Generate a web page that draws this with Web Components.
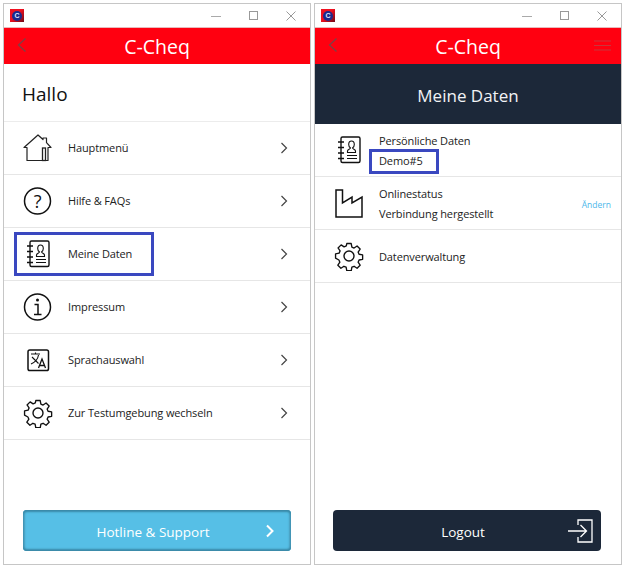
<!DOCTYPE html>
<html lang="de"><head><meta charset="utf-8"><title>C-Cheq</title>
<style>
html,body{margin:0;padding:0;background:#fff;height:100%;overflow:hidden}
body{font-family:"Open Sans","Noto Sans",sans-serif}
#stage{display:flex;gap:3px;padding:3px 0 0 3px;box-sizing:border-box;height:567px}
</style></head><body>
<div id="stage">
<app-window>
  <menu-list>
    <greeting-head>Hallo</greeting-head>
    <menu-row icon="home" chevron>Hauptmenü</menu-row>
    <menu-row icon="help" chevron>Hilfe &amp; FAQs</menu-row>
    <menu-row icon="book" chevron mark>Meine Daten</menu-row>
    <menu-row icon="info" chevron>Impressum</menu-row>
    <menu-row icon="lang" chevron>Sprachauswahl</menu-row>
    <menu-row icon="gear" chevron>Zur Testumgebung wechseln</menu-row>
  </menu-list>
  <action-button slot="foot" kind="hotline">Hotline &amp; Support</action-button>
</app-window>
<app-window menu>
  <menu-list>
    <page-banner>Meine Daten</page-banner>
    <menu-row low icon="book" sub="Demo#5" marksub>Persönliche Daten</menu-row>
    <menu-row low icon="factory" sub="Verbindung hergestellt" action="Ändern">Onlinestatus</menu-row>
    <menu-row low icon="gear">Datenverwaltung</menu-row>
  </menu-list>
  <action-button slot="foot" kind="logout" style="margin:0 1px 0 -1px">Logout</action-button>
</app-window>
</div>
<script>
const ICONS={
home:'<path d="M1 14.500 15 2l5 4.500V5h3.500v4.700L28 14.500h-3V27.500H4V14.500Z" fill="none" stroke="#222" stroke-width="1.200" stroke-linejoin="round"/><rect x="19.500" y="15" width="3" height="12.500" fill="none" stroke="#222" stroke-width="1.300"/>',
help:'<circle cx="14.500" cy="15" r="13" fill="none" stroke="#111" stroke-width="1.500"/><text x="14.500" y="21.500" text-anchor="middle" font-family="Open Sans,sans-serif" font-size="18" fill="#111">?</text>',
info:'<circle cx="14.500" cy="15" r="13" fill="none" stroke="#111" stroke-width="1.500"/><circle cx="14.500" cy="8" r="1.500" fill="#111"/><path d="M11.500 12.500h3.500V22M11 22.500h7.500" fill="none" stroke="#111" stroke-width="1.500"/>',
book:'<rect x="7" y="2" width="19" height="25.500" rx="1.500" fill="none" stroke="#111" stroke-width="1.400"/><path d="M4 7h6M4 12.500h6M4 18h6M4 23.500h6" stroke="#111" stroke-width="1.500"/><path d="M13.500 17.500v-1.500c0-1.500 2.800-1.800 3-3-1.300-.8-1.800-2-1.800-3.500 0-2 1-3.500 2.800-3.500s2.800 1.500 2.800 3.500c0 1.500-.5 2.700-1.800 3.500.2 1.200 3 1.500 3 3v1.500ZM13 20.500h10M13 23.500h10" fill="none" stroke="#111" stroke-width="1.100"/>',
lang:'<rect x="5" y="5" width="20.500" height="20.500" rx="1.800" fill="none" stroke="#111" stroke-width="1.500"/><path d="M8 9h9M12.500 7.500V9M9 12l6.500 6.500M15.500 10c-.5 3.500-3 7-7.500 9" fill="none" stroke="#111" stroke-width="1.100"/><path d="M15.500 23l3.500-9 3.500 9M16.700 20.500h4.600" fill="none" stroke="#111" stroke-width="1.300"/>',
gear:'<path d="M12.700 2h4.600l.7 3.700 2.300 1 3.100-2.100 3.200 3.200-2.100 3.100 1 2.300 3.700.7v4.600l-3.700.7-1 2.300 2.100 3.100-3.200 3.200-3.100-2.100-2.300 1-.7 3.700h-4.600l-.7-3.700-2.300-1-3.100 2.100-3.200-3.200 2.100-3.100-1-2.300L1 17.300v-4.600l3.700-.7 1-2.300-2.100-3.100 3.200-3.200 3.100 2.100 2.300-1Z" transform="translate(15 15) scale(.96) translate(-15 -15)" fill="none" stroke="#111" stroke-width="1.400" stroke-linejoin="round"/><circle cx="15" cy="15" r="5" fill="none" stroke="#111" stroke-width="1.400"/>',
factory:'<path d="M2 29V2h6.500v13l9.500-6v6l10-6v20Z" fill="none" stroke="#111" stroke-width="1.500" stroke-linejoin="miter"/>'
};
function def(name,css,html,extra){
  customElements.define(name,class extends HTMLElement{
    constructor(){super();this.attachShadow({mode:'open'}).innerHTML='<style>'+css+'</style>'+html;}
    connectedCallback(){extra&&extra(this,this.shadowRoot);}
  });
}
def('window-controls',`
:host{display:flex;align-items:center;height:23px;background:#fff;border-bottom:1px solid #e9b9bb;padding:0 0 0 6px;box-sizing:content-box}
.logo{width:14px;height:13px;background:linear-gradient(135deg,#f01020 0 45%,#700818);display:flex;align-items:center;justify-content:center}
.logo i{width:10px;height:10px;border-radius:50%;background:#1c2a8c;display:flex;align-items:center;justify-content:center;font:700 7px "Liberation Sans",sans-serif;color:#dfe3ff;font-style:normal}
.sp{flex:1}
.b{width:37.500px;height:23px;display:flex;align-items:center;justify-content:center}
svg{display:block}`,`
<div class="logo"><i>C</i></div><div class="sp"></div>
<div class="b"><svg width="10" height="10"><path d="M0 5.500h10" stroke="#aaa"/></svg></div>
<div class="b"><svg width="10" height="10"><rect x=".5" y=".5" width="8" height="8" fill="none" stroke="#999"/></svg></div>
<div class="b"><svg width="10" height="10"><path d="M.5.500l9 9M9.500.500l-9 9" stroke="#999"/></svg></div>`);
def('app-header',`
:host{display:grid;grid-template-columns:36px 1fr 36px;align-items:center;height:36px;background:#ff0010;color:#fff;font-size:19.500px;text-align:center}
svg{display:block;margin:auto}
.t{line-height:36px;position:relative;top:1px}`,`
<svg width="10" height="16" style="margin:-3px 0 0 13px"><path d="M8.500 1.500 1.500 8l7 6.500" fill="none" stroke="#7d4046" stroke-width="1.300"/></svg>
<div class="t">C-Cheq</div>
<div class="m"></div>`);
def('app-window',`
:host{display:flex;flex-direction:column;width:306px;height:560px;border:1px solid #c6c6c6;background:#fff;box-sizing:content-box;position:relative}
main{flex:1;min-height:0}
footer{padding:0 19px 13px 19px}`,`
<window-controls></window-controls><app-header></app-header>
<main><slot></slot></main><footer><slot name="foot"></slot></footer>`,(el,s)=>{
  if(el.hasAttribute('menu'))s.querySelector('app-header').shadowRoot.querySelector('.m').innerHTML='<svg width="17" height="11" style="margin:-1px 0 0 9px"><path d="M0 1h17M0 5.500h17M0 10h17" stroke="#c9353c" stroke-width="1"/></svg>';
});
def('menu-list',`:host{display:block}`,`<slot></slot>`);
def('greeting-head',`:host{display:flex;align-items:center;box-sizing:border-box;height:58px;padding:2px 0 0 18px;font-size:19px;color:#111;border-bottom:1px solid #ececec}`,`<slot></slot>`);
def('page-banner',`:host{display:flex;align-items:center;justify-content:center;box-sizing:border-box;height:60px;padding-top:2px;background:#1c2839;color:#f2f3f5;font-size:17px}`,`<slot></slot>`);
def('menu-row',`
:host{display:grid;grid-template-columns:64px 1fr auto 30px;align-items:center;height:52px;border-bottom:1px solid #e6e6e6;color:#222;font-size:11px;letter-spacing:-.12px;position:relative}
:host([action]){grid-template-columns:64px 1fr auto 10px}
:host([low]) .tx{padding-top:2px}
.ic{padding-left:19px;display:flex}
.tx{display:flex;flex-direction:column;gap:2px;line-height:18px}
.ac{color:#4db8ea;font-size:8.500px;letter-spacing:0;padding-top:2px}
.ch{display:flex}
.mark{position:absolute;border:3.500px solid #3a48c0;box-sizing:border-box;pointer-events:none;left:10px;top:4px;width:140px;height:44px}
.submark{position:absolute;border:3.500px solid #3a48c0;box-sizing:border-box;left:54px;top:25px;width:70px;height:25px}
svg{display:block}`,`
<div class="ic"></div><div class="tx"><div><slot></slot></div></div><div class="ac"></div><div class="ch"></div>`,(el,s)=>{
  s.querySelector('.ic').innerHTML='<svg width="30" height="30" viewBox="0 0 30 30">'+ICONS[el.getAttribute('icon')]+'</svg>';
  const tx=s.querySelector('.tx');
  if(el.hasAttribute('sub')){const d=document.createElement('div');d.textContent=el.getAttribute('sub');tx.appendChild(d);}
  if(el.hasAttribute('action'))s.querySelector('.ac').textContent=el.getAttribute('action');
  if(el.hasAttribute('chevron'))s.querySelector('.ch').innerHTML='<svg width="8" height="12"><path d="M1.500 1 6.500 6l-5 5" fill="none" stroke="#444" stroke-width="1.200"/></svg>';
  if(el.hasAttribute('mark')){const m=document.createElement('div');m.className='mark';s.appendChild(m);}
  if(el.hasAttribute('marksub')){const m=document.createElement('div');m.className='submark';s.appendChild(m);}
});
def('action-button',`
:host{display:grid;grid-template-columns:1fr 40px;align-items:center;height:41px;border-radius:4px;font-size:13.500px;color:#fff;text-align:center;box-sizing:border-box}
:host([kind=hotline]){background:#56bfe6;box-shadow:inset 0 2px 2px #3a8aa8,inset 0 -2px 2px #3a8aa8,inset 2px 0 2px #4ba0c0,inset -2px 0 2px #4ba0c0}
:host([kind=logout]){background:#1c2839}
.t{padding:2px 0 0 32px}
svg{display:block}`,`
<div class="t"><slot></slot></div><div class="i"></div>`,(el,s)=>{
  s.querySelector('.i').innerHTML=el.getAttribute('kind')==='logout'
   ?'<svg width="28" height="26" style="margin-left:6px"><path d="M11 7V2h14v22H11v-5M1 13h18M13.500 7l6 6-6 6" fill="none" stroke="#fff" stroke-width="1.300"/></svg>'
   :'<svg width="10" height="14" style="margin-left:14px"><path d="M2 1.500 7.500 7 2 12.500" fill="none" stroke="#fff" stroke-width="2"/></svg>';
});
</script>
</body></html>
